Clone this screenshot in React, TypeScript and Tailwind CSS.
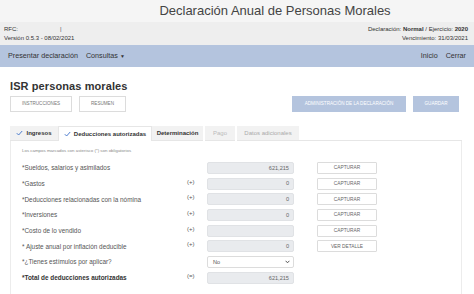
const rows = [
  { label: '*Sueldos, salarios y asimilados', op: '', value: '621,215', action: 'CAPTURAR' },
  { label: '*Gastos', op: '(+)', value: '0', action: 'CAPTURAR' },
  { label: '*Deducciones relacionadas con la nómina', op: '(+)', value: '0', action: 'CAPTURAR' },
  { label: '*Inversiones', op: '(+)', value: '0', action: 'CAPTURAR' },
  { label: '*Costo de lo vendido', op: '(+)', value: '', action: 'CAPTURAR' },
  { label: '* Ajuste anual por inflación deducible', op: '(+)', value: '0', action: 'VER DETALLE' },
];

function Check() {
  return (
    <svg width="7" height="6" viewBox="0 0 7 6" className="mr-[3px]">
      <path d="M0.8 3.2 L2.6 5 L6.2 1" fill="none" stroke="#3b6fc9" strokeWidth="0.9" />
    </svg>
  );
}

export default function App() {
  return (
    <div className="w-[474px] h-[294px] overflow-hidden bg-white text-[#333]" style={{ fontFamily: '"Liberation Sans", Arial, sans-serif' }}>
      {/* encabezado */}
      <div className="h-[22px] bg-[#f5f5f5] flex items-center justify-center text-[13px] text-[#444] pl-[76px]">
        Declaración Anual de Personas Morales
      </div>
      <div className="h-[23px] bg-[#eeeeee] flex justify-between px-[4px] pt-[3px] text-[6px] leading-[9px] text-[#333]">
        <div>
          <div className="flex">
            <span className="w-[56px]">RFC:</span>
            <span className="text-[#555]">|</span>
          </div>
          <div>Versión 0.5.3 - 08/02/2021</div>
        </div>
        <div className="text-right pr-[2px]">
          <div>Declaración: <b>Normal</b> / Ejercicio: <b>2020</b></div>
          <div>Vencimiento: 31/03/2021</div>
        </div>
      </div>
      <div className="h-[22px] bg-[#b4c4de] flex items-center justify-between px-[8px] text-[7.2px] text-[#333]">
        <div className="flex items-center gap-[8px]">
          <span>Presentar declaración</span>
          <span>Consultas <span className="text-[5px]">▼</span></span>
        </div>
        <div className="flex items-center gap-[8px]">
          <span>Inicio</span>
          <span>Cerrar</span>
        </div>
      </div>

      {/* contenido */}
      <div className="px-[10px] pt-[12px]">
        <div className="text-[11px] font-bold text-[#333] leading-[14px] tracking-[0.1px]">ISR personas morales</div>
        <div className="flex justify-between mt-[3px] h-[16px]">
          <div className="flex gap-[7px]">
            <div className="w-[62px] border border-[#dcdcdc] flex items-center justify-center text-[4.6px] text-[#777]">INSTRUCCIONES</div>
            <div className="w-[47px] border border-[#dcdcdc] flex items-center justify-center text-[4.6px] text-[#777]">RESUMEN</div>
          </div>
          <div className="flex gap-[7px] pr-[5px]">
            <div className="w-[114px] bg-[#b4c4de] flex items-center justify-center text-[4.6px] text-white">ADMINISTRACIÓN DE LA DECLARACIÓN</div>
            <div className="w-[46px] bg-[#b4c4de] flex items-center justify-center text-[4.6px] text-white">GUARDAR</div>
          </div>
        </div>

        {/* pestañas */}
        <div className="flex mt-[14px] h-[15px] text-[6px] pr-[2px]">
          <div className="w-[48px] bg-[#f2f2f2] border-b border-[#e6e6e6] flex items-center justify-center font-bold text-[#333]"><Check />Ingresos</div>
          <div className="w-[94px] bg-white border border-b-0 border-[#e6e6e6] flex items-center justify-center font-bold text-[#333]"><Check />Deducciones autorizadas</div>
          <div className="w-[51px] bg-[#f2f2f2] border-b border-[#e6e6e6] flex items-center justify-center font-bold text-[#333]">Determinación</div>
          <div className="w-[30px] ml-[2px] bg-[#f2f2f2] border-b border-[#e6e6e6] flex items-center justify-center text-[#bbb]">Pago</div>
          <div className="w-[62px] ml-[2px] bg-[#f2f2f2] border-b border-[#e6e6e6] flex items-center justify-center text-[#aaa]">Datos adicionales</div>
          <div className="flex-1 border-b border-[#e6e6e6]" />
        </div>
        <div className="h-[160px] border border-t-0 border-[#ececec] mr-[2px] pl-[11px] pt-[7px]">
          <div className="text-[4.4px] text-[#888] leading-[6px]">Los campos marcados con asterisco (*) son obligatorios</div>
          <div className="flex flex-col gap-[3.7px] mt-[8px]">
            {rows.map((r) => (
              <div key={r.label} className="flex items-center h-[12px]">
                <div className="w-[165px] text-[6.4px] text-[#555]">{r.label}</div>
                <div className="w-[20px] text-[6px] text-[#555] -mt-[3px]">{r.op}</div>
                <div className="w-[87px] h-[12px] bg-[#e9ebee] rounded-[2px] border border-[#e0e2e5] flex items-center justify-end pr-[4px] text-[5.6px] text-[#666]">{r.value}</div>
                <div className="ml-[23px] w-[60px] h-[12px] border border-[#dcdcdc] rounded-[1px] flex items-center justify-center text-[4.8px] text-[#666]">{r.action}</div>
              </div>
            ))}
            <div className="flex items-center h-[12px]">
              <div className="w-[185px] text-[6.4px] text-[#555]">*¿Tienes estímulos por aplicar?</div>
              <div className="w-[87px] h-[12px] bg-white rounded-[2px] border border-[#dcdcdc] flex items-center justify-between pl-[5px] pr-[3px] text-[5.6px] text-[#555]">
                <span>No</span>
                <svg width="5" height="4" viewBox="0 0 5 4"><path d="M0.6 0.8 L2.5 2.8 L4.4 0.8" fill="none" stroke="#444" strokeWidth="0.9" /></svg>
              </div>
            </div>
            <div className="flex items-center h-[12px]">
              <div className="w-[165px] text-[6.4px] text-[#333] font-bold">*Total de deducciones autorizadas</div>
              <div className="w-[20px] text-[6px] text-[#555] -mt-[3px]">(=)</div>
              <div className="w-[87px] h-[12px] bg-[#e9ebee] rounded-[2px] border border-[#e0e2e5] flex items-center justify-end pr-[4px] text-[5.6px] text-[#666]">621,215</div>
            </div>
          </div>
        </div>
      </div>
    </div>
  );
}
